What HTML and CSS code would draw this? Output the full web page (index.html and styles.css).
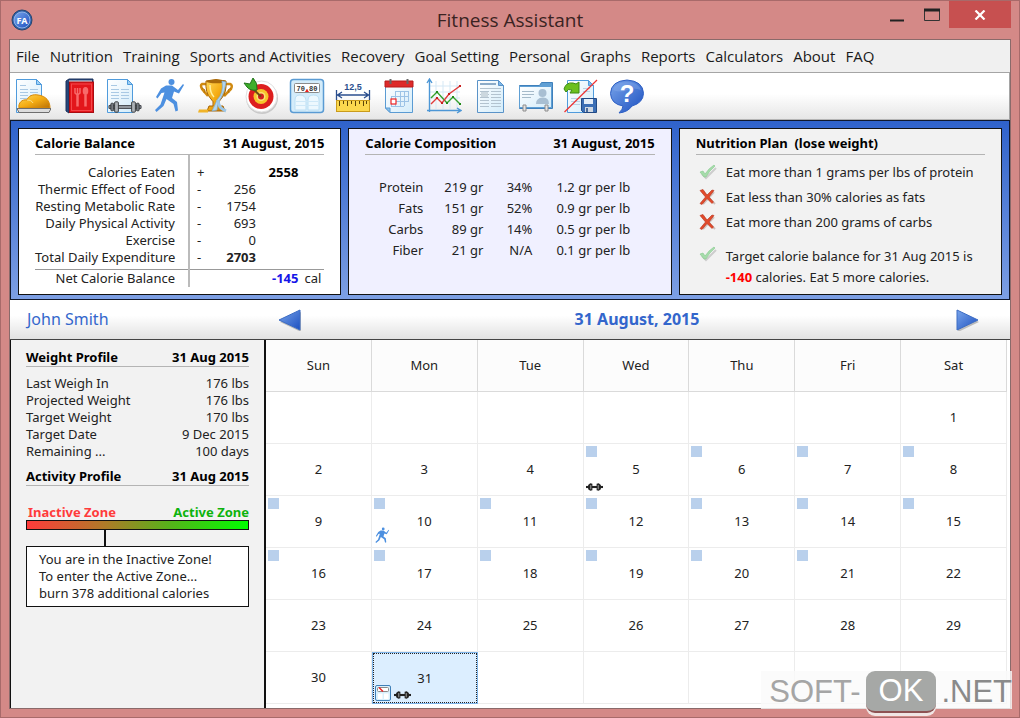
FILE: index.html
```html
<!DOCTYPE html>
<html lang="en">
<head>
    <meta charset="UTF-8">
    <meta name="viewport" content="width=device-width, initial-scale=1.0">
    <title>Fitness Assistant</title>
    <link rel="stylesheet" href="styles.css">
</head>
<body>
    <!-- shared icons -->
    <svg class="defs" aria-hidden="true">
        <defs>
            <linearGradient id="gold" x1="0" y1="0" x2="1" y2="1">
                <stop offset="0" stop-color="#ffd95a"/>
                <stop offset="0.5" stop-color="#f5ad14"/>
                <stop offset="1" stop-color="#b96f05"/>
            </linearGradient>
            <linearGradient id="blue" x1="0" y1="0" x2="1" y2="1">
                <stop offset="0" stop-color="#79a5ea"/>
                <stop offset="1" stop-color="#1c4fc0"/>
            </linearGradient>
            <linearGradient id="paper" x1="0" y1="0" x2="1" y2="1">
                <stop offset="0" stop-color="#ffffff"/>
                <stop offset="1" stop-color="#d3ecfa"/>
            </linearGradient>
        </defs>
        <symbol id="sheet" viewBox="0 0 36 36">
            <path d="M1.5 1.5h20l5 5v28h-25z" fill="url(#paper)" stroke="#4f9bdc"/>
            <path d="M21.5 1.5v5h5z" fill="#9dd0f5" stroke="#4f9bdc"/>
            <path d="M5 7.5h6M5 11.5h8M15 11.5h8M5 14.5h8M15 14.5h8M5 17.5h8M15 17.5h8M5 20.5h8M15 20.5h8" stroke="#a9c9e4"/>
        </symbol>
        <symbol id="runner" viewBox="0 0 36 36">
            <circle cx="19.500" cy="4" r="3" fill="currentColor"/>
            <path d="M9 10.500 14 7.500h6l6 4.500 5-6 1 1-5 8.500-5-2-2 6.500 5 4 1 8.500-2.500 1-2-7.500-7-5-3 7-7 6-1.500-2 5.500-5.500 4-12-3 .500-4 5.500-1.500-1.500z" fill="currentColor"/>
        </symbol>
        <symbol id="dumbbell" viewBox="0 0 36 12">
            <path d="M1 4.500h34v3H1z" fill="#9aa0a6" stroke="#3b3f44"/>
            <rect x="3" y="2" width="3" height="8" rx="1" fill="#777c82" stroke="#34383c"/>
            <rect x="7" y="0.500" width="4" height="11" rx="1" fill="#aeb3b8" stroke="#34383c"/>
            <rect x="25" y="0.500" width="4" height="11" rx="1" fill="#aeb3b8" stroke="#34383c"/>
            <rect x="30" y="2" width="3" height="8" rx="1" fill="#777c82" stroke="#34383c"/>
        </symbol>
        <symbol id="weights" viewBox="0 0 16 8">
            <path d="M0 4h16" stroke="#222" stroke-width="2"/>
            <path d="M2 2 4 .500 6 1v6L4 7.500 2 6zM14 2 12 .500 10 1v6l2 .500L14 6z" fill="#222"/>
            <path d="M4.500 2v4M11.500 2v4" stroke="#999"/>
        </symbol>
        <symbol id="check" viewBox="0 0 18 16">
            <path d="M3 10l4 4L17 4" fill="none" stroke="#cdcdcd" stroke-width="2"/>
            <path d="M1 8l3-1 2 3q4-6 9-9l1 1q-6 5-9 11H5z" fill="#a5dcaa" stroke="#86c98e" stroke-width="0.600"/>
        </symbol>
        <symbol id="cross" viewBox="0 0 18 16">
            <path d="M4 3l12 12M15 3 4 15" stroke="#cfc0bc" stroke-width="2"/>
            <path d="M1 1.500 4 .500 8 6 13 1l2 .500L10 8l4.500 5-1.500 1.500-5-5-5 6-2-1L6.500 8z" fill="#e24a2b" stroke="#b5301a" stroke-width="0.600"/>
        </symbol>
    </svg>

    <div class="window">
        <header class="titlebar">
            <svg class="logo" viewBox="0 0 22 22" aria-hidden="true">
                <circle cx="11" cy="11" r="10" fill="#2d5ea8" stroke="#27466f"/>
                <circle cx="11" cy="11" r="8" fill="url(#blue)" stroke="#8fb4e6"/>
                <text x="11" y="14.500" text-anchor="middle" class="logo-text">FA</text>
            </svg>
            <h1>Fitness Assistant</h1>
            <div class="controls">
                <button type="button" aria-label="Minimize">
                    <svg width="16" height="14"><path d="M1 12.500h14" stroke="#222" stroke-width="2"/></svg>
                </button>
                <button type="button" aria-label="Maximize">
                    <svg width="16" height="14"><path d="M.500 1.500h15v11H.500z" fill="none" stroke="#333"/><path d="M0 2h16" stroke="#222" stroke-width="3"/></svg>
                </button>
                <button type="button" class="close" aria-label="Close">
                    <svg width="12" height="10"><path d="M1.500.500l9 9M10.500.500l-9 9" stroke="#fff" stroke-width="2.200"/></svg>
                </button>
            </div>
        </header>

        <div class="client">
            <nav class="menu">
                <a href="#">File</a>
                <a href="#">Nutrition</a>
                <a href="#">Training</a>
                <a href="#">Sports and Activities</a>
                <a href="#">Recovery</a>
                <a href="#">Goal Setting</a>
                <a href="#">Personal</a>
                <a href="#">Graphs</a>
                <a href="#">Reports</a>
                <a href="#">Calculators</a>
                <a href="#">About</a>
                <a href="#">FAQ</a>
            </nav>

            <div class="toolbar">
                <div class="tools">
                    <button type="button" aria-label="Meals">
                        <svg viewBox="0 0 36 36">
                            <use href="#sheet" width="36" height="36"/>
                            <path d="M4 30c-1-5 3-9 8-8 1-4 6-6 11-5 8 1 12 6 12 13z" fill="url(#gold)" stroke="#d98a08"/>
                            <path d="M12 22c3 0 5 1 6 3" fill="none" stroke="#fce08a"/>
                            <path d="M2 30.500h34l-2 4H4z" fill="#dcdcdc" stroke="#6e6e6e"/>
                        </svg>
                    </button>
                    <button type="button" aria-label="Recipes">
                        <svg viewBox="0 0 36 36">
                            <path d="M5 3l3-2h24v3H8v31l-3-2z" fill="#27477c" stroke="#1c325a"/>
                            <path d="M8 2.500h23v2H8z" fill="#e9e9e9"/>
                            <rect x="8.500" y="4" width="24" height="30.500" fill="#e3161b" stroke="#a80d12"/>
                            <rect x="10.500" y="6" width="20" height="26.500" fill="none" stroke="#f4474a"/>
                            <path d="M16.500 16v12.500M24.500 17v11.500" stroke="#f86a6a" stroke-width="2.500"/>
                            <path d="M14 10v5q2.500 3 5 0v-5M16.500 10v6" fill="none" stroke="#f86a6a" stroke-width="1.500"/>
                            <ellipse cx="24.500" cy="13" rx="2.800" ry="4" fill="#f86a6a"/>
                        </svg>
                    </button>
                    <button type="button" aria-label="Training log">
                        <svg viewBox="0 0 36 36">
                            <use href="#sheet" width="36" height="36"/>
                            <use href="#dumbbell" x="2" y="23" width="34" height="12"/>
                        </svg>
                    </button>
                    <button type="button" aria-label="Activities" class="blue">
                        <svg viewBox="0 0 36 36"><use href="#runner" width="36" height="36"/></svg>
                    </button>
                    <button type="button" aria-label="Achievements">
                        <svg viewBox="0 0 36 36">
                            <path d="M10 6H4q-2 1 0 5l6 7M27 6h5q3 1 1 5l-7 7" fill="none" stroke="#d08a10" stroke-width="2.500"/>
                            <path d="M4 10l3 2-1 3M33 10l-3 2 1 3" fill="none" stroke="#b87407"/>
                            <path d="M8 3q10-3 20 0 1 12-5 18-3 2-2 7h4l2 5H9l2-5h4q1-5-2-7Q7 15 8 3z" fill="url(#gold)" stroke="#a66406"/>
                            <ellipse cx="18" cy="3.500" rx="9.500" ry="1.800" fill="#a8690a"/>
                            <path d="M12 7q0 8 4 12" fill="none" stroke="#fff0a0" stroke-width="1.500"/>
                            <path d="M24 3q2 12-5 19-2 5-5 11l5-1q0-8 4-12 4-7 5-16z" fill="#b4d5ee" stroke="#7aaed5" stroke-width="0.700"/>
                            <path d="M20 22q0 8 8 11" fill="none" stroke="#9cc6e6" stroke-width="3"/>
                            <path d="M1 31.500h9v3H0z" fill="#f0b429"/>
                        </svg>
                    </button>
                    <button type="button" aria-label="Goals">
                        <svg viewBox="0 0 36 36">
                            <circle cx="19" cy="20" r="16" fill="#c9c9c9"/>
                            <circle cx="18.500" cy="18.500" r="15.500" fill="#fff" stroke="#e0e0e0"/>
                            <circle cx="18" cy="18.500" r="12.500" fill="#dd1f1f"/>
                            <circle cx="18" cy="18.500" r="7.500" fill="#f7c52b"/>
                            <circle cx="18" cy="18.500" r="4.500" fill="#fbe277"/>
                            <circle cx="18" cy="18.500" r="3" fill="#d32020"/>
                            <path d="M18 18.500 7 8" stroke="#6b4a14" stroke-width="2"/>
                            <path d="M1 5l6 1 3-6q5 5 4 12-7 1-10-3z" fill="#3fae2c" stroke="#21751a"/>
                        </svg>
                    </button>
                    <button type="button" aria-label="Weight">
                        <svg viewBox="0 0 36 36">
                            <rect x="1.500" y="1.500" width="33" height="33" rx="3" fill="#d4ecfa" stroke="#5a9bd3" stroke-width="1.500"/>
                            <rect x="5.500" y="5.500" width="25" height="9" rx="1" fill="#fff" stroke="#8a8a8a"/>
                            <text x="18" y="12.500" text-anchor="middle" class="scale-text">70,80</text>
                            <path d="M18 11l2 3h-4z" fill="#e22"/>
                            <path d="M6 32V22q0-5 5-5t6 5v10zM19 32V22q0-5 5.500-5t5.500 5v10z" fill="#edf8fe" stroke="#bcdff4"/>
                            <path d="M7 23.500h22M7 27.500h22" stroke="#cfe8f7"/>
                        </svg>
                    </button>
                    <button type="button" aria-label="Measurements">
                        <svg viewBox="0 0 36 36">
                            <text x="18" y="12" text-anchor="middle" class="ruler-text">12,5</text>
                            <path d="M1.500 12v10M34.500 12v10M2 17h32M7 14l-4.500 3 4.500 3M29 14l4.500 3-4.500 3" fill="none" stroke="#2b4f8e" stroke-width="1.300"/>
                            <rect x="1.500" y="22.500" width="33" height="11" fill="#fbd84e" stroke="#c99b1c"/>
                            <path d="M4.500 23v5M8.500 23v3M12.500 23v5M16.500 23v3M20.500 23v5M24.500 23v3M28.500 23v5M31.500 23v3" stroke="#5c4508"/>
                        </svg>
                    </button>
                    <button type="button" aria-label="Calendar">
                        <svg viewBox="0 0 36 36">
                            <path d="M4.500 4.500h27v30H9l-4.500-4.500z" fill="url(#paper)" stroke="#5a9bd3"/>
                            <path d="M4.500 30H9v4.500z" fill="#8cc4ee" stroke="#5a9bd3"/>
                            <path d="M4 3h28v6H4z" fill="#dd2a2a" stroke="#b81b1b"/>
                            <path d="M9.500 1v5M26.500 1v5" stroke="#666" stroke-width="2"/>
                            <path d="M15 13.500h13M10 18.500h18M10 23.500h18M10 28.500h13M14.500 13v15M19.500 13v15M23.500 13v15M27.500 13v11M10.500 18v10" stroke="#9cc3e6"/>
                            <rect x="10" y="21" width="5" height="5" fill="#fff" stroke="#e22" stroke-width="1.200"/>
                        </svg>
                    </button>
                    <button type="button" aria-label="Graphs">
                        <svg viewBox="0 0 36 36">
                            <path d="M4 8h30M4 14h30M4 20h30M10 3v28M17 3v28M24 3v28M31 3v28" stroke="#d5e8f5"/>
                            <path d="M3.500 34V2M1 5l2.500-4L6 5M1 32.500h33M31 30l4 2.500-4 2.500" fill="none" stroke="#4d97d6" stroke-width="1.400"/>
                            <path d="M5 20l6-6 10 11 6-6 7 7" fill="none" stroke="#35a02c" stroke-width="1.400"/>
                            <path d="M5 26l6-6 5 5 7-9 11-8" fill="none" stroke="#e03a3a" stroke-width="1.400"/>
                            <path d="M10 13h2v2h-2zM20 24h2v2h-2zM26 18h2v2h-2zM33 25h2v2h-2z" fill="#1f8a18"/>
                            <path d="M10 19h2v2h-2zM15 24h2v2h-2zM22 15h2v2h-2zM33 7h2v2h-2z" fill="#c81e1e"/>
                        </svg>
                    </button>
                    <button type="button" aria-label="Reports">
                        <svg viewBox="0 0 36 36">
                            <path d="M5.500 2.500h21l5 5v27h-26z" fill="url(#paper)" stroke="#5a93c8"/>
                            <path d="M26.500 2.500v5h5z" fill="#7db8ea" stroke="#5a93c8"/>
                            <path d="M8 6h16" stroke="#8babc8" stroke-width="2"/>
                            <path d="M8 10.500h21M8 13.500h9M19 13.500h10M8 16.500h9M19 16.500h10M8 19.500h9M19 19.500h10M8 22.500h9M19 22.500h10M8 25.500h9M19 25.500h10M8 28.500h9M19 28.500h10" stroke="#b3c3cf"/>
                            <path d="M9 14h7v5H9z" fill="#ccd8df"/>
                        </svg>
                    </button>
                    <button type="button" aria-label="Personal card">
                        <svg viewBox="0 0 36 36">
                            <path d="M1.500 7.500h20l2-3h11v26h-33z" fill="#5f9fd4" stroke="#3f80bb"/>
                            <path d="M1.500 8.500h32v21h-32z" fill="url(#paper)" stroke="#5f9fd4"/>
                            <path d="M4 13.500h12M4 16.500h12M4 19.500h9" stroke="#a5bac9"/>
                            <circle cx="24.500" cy="15" r="4" fill="#a8bfd2"/>
                            <path d="M18 26q0-6 6.500-6.500T31 26z" fill="#a8bfd2"/>
                            <path d="M5 27h3v6H5zM27 27h3v6h-3z" fill="#e4e4e4" stroke="#8c8c8c"/>
                        </svg>
                    </button>
                    <button type="button" aria-label="Import">
                        <svg viewBox="0 0 36 36">
                            <path d="M4.500 2.500h21l5 5v27h-26z" fill="url(#paper)" stroke="#4f9bdc"/>
                            <path d="M25.500 2.500v5h5z" fill="#7db8ea" stroke="#4f9bdc"/>
                            <path d="M20 10.500h7M20 13.500h7M8 20.500h18M8 23.500h9M8 26.500h9" stroke="#b9d3e6"/>
                            <path d="M1 11q2-7 9-6l3 1 3-2v11H7l2-3q-4-2-6 2z" fill="#6cc01e" stroke="#3a8a10"/>
                            <path d="M18.500 20.500h15v14h-13l-2-2z" fill="#3c6fb5" stroke="#224a85"/>
                            <path d="M21 21h9v5h-9z" fill="#e5eef8"/>
                            <path d="M22 29h8v5h-8z" fill="#cfd8e2"/>
                            <path d="M24 30v4" stroke="#224a85" stroke-width="1.500"/>
                            <path d="M1.500 34 34 2" stroke="#ee3333" stroke-width="1.200"/>
                        </svg>
                    </button>
                    <button type="button" aria-label="Help">
                        <svg viewBox="0 0 36 36">
                            <path d="M18 2q16 1 16.500 13.500Q34 25 23 28q-4 6-13 7 4-4 4-7Q2 26 1.500 15.500 2 3 18 2z" fill="url(#blue)" stroke="#2d5fc4"/>
                            <path d="M4 12q3-8 14-8t14 8q-8-3-14 0t-14 0z" fill="#8fb3ef" opacity=".35"/>
                            <text x="18" y="24" text-anchor="middle" class="help-text">?</text>
                        </svg>
                    </button>
                </div>
            </div>

            <section class="summary">
                <article class="panel">
                    <div class="panel-head"><h2>Calorie Balance</h2><span>31 August, 2015</span></div>
                    <table class="balance">
                        <tr class="spacer"><td></td><td></td><td></td><td></td></tr>
                        <tr><th>Calories Eaten</th><td class="sign">+</td><td></td><td class="sum">2558</td></tr>
                        <tr><th>Thermic Effect of Food</th><td class="sign">-</td><td>256</td><td></td></tr>
                        <tr><th>Resting Metabolic Rate</th><td class="sign">-</td><td>1754</td><td></td></tr>
                        <tr><th>Daily Physical Activity</th><td class="sign">-</td><td>693</td><td></td></tr>
                        <tr><th>Exercise</th><td class="sign">-</td><td>0</td><td></td></tr>
                        <tr class="total"><th>Total Daily Expenditure</th><td class="sign">-</td><td><b>2703</b></td><td></td></tr>
                        <tr class="net"><th>Net Calorie Balance</th><td></td><td></td><td class="cal"><b>-145</b>cal</td></tr>
                    </table>
                </article>

                <article class="panel composition">
                    <div class="panel-head"><h2>Calorie Composition</h2><span>31 August, 2015</span></div>
                    <table class="nutrients">
                        <tr><th>Protein</th><td>219 gr</td><td>34%</td><td>1.2 gr per lb</td></tr>
                        <tr><th>Fats</th><td>151 gr</td><td>52%</td><td>0.9 gr per lb</td></tr>
                        <tr><th>Carbs</th><td>89 gr</td><td>14%</td><td>0.5 gr per lb</td></tr>
                        <tr><th>Fiber</th><td>21 gr</td><td>N/A</td><td>0.1 gr per lb</td></tr>
                    </table>
                </article>

                <article class="panel plan">
                    <div class="panel-head"><h2>Nutrition Plan&nbsp; (lose weight)</h2></div>
                    <ul>
                        <li><svg><use href="#check"/></svg>Eat more than 1 grams per lbs of protein</li>
                        <li><svg><use href="#cross"/></svg>Eat less than 30% calories as fats</li>
                        <li><svg><use href="#cross"/></svg>Eat more than 200 grams of carbs</li>
                        <li class="target"><svg><use href="#check"/></svg><p>Target calorie balance for 31 Aug 2015 is<br><b>-140</b> calories. Eat 5 more calories.</p></li>
                    </ul>
                </article>
            </section>

            <div class="daybar">
                <span class="user">John Smith</span>
                <div class="switch">
                    <button type="button" aria-label="Previous day"><svg viewBox="0 0 24 22"><path d="M2 13 23 3v20z" fill="#bbb"/><path d="M1 11 22 1v20z" fill="url(#blue)" stroke="#3c6cc4"/></svg></button>
                    <h2>31 August, 2015</h2>
                    <button type="button" aria-label="Next day"><svg viewBox="0 0 24 22"><path d="M2 3v20l21-10z" fill="#bbb"/><path d="M1 1v20l21-10z" fill="url(#blue)" stroke="#3c6cc4"/></svg></button>
                </div>
            </div>

            <main class="main">
                <aside class="profile">
                    <div class="profile-head"><h3>Weight Profile</h3><span>31 Aug 2015</span></div>
                    <dl>
                        <div><dt>Last Weigh In</dt><dd>176 lbs</dd></div>
                        <div><dt>Projected Weight</dt><dd>176 lbs</dd></div>
                        <div><dt>Target Weight</dt><dd>170 lbs</dd></div>
                        <div><dt>Target Date</dt><dd>9 Dec 2015</dd></div>
                        <div><dt>Remaining ...</dt><dd>100 days</dd></div>
                    </dl>
                    <div class="profile-head"><h3>Activity Profile</h3><span>31 Aug 2015</span></div>
                    <div class="zones"><span class="inactive">Inactive Zone</span><span class="active">Active Zone</span></div>
                    <div class="zone-bar"></div>
                    <div class="zone-tick"></div>
                    <p class="zone-note">You are in the Inactive Zone!<br>To enter the Active Zone...<br>burn 378 additional calories</p>
                </aside>

                <table class="calendar">
                    <thead>
                        <tr><th>Sun</th><th>Mon</th><th>Tue</th><th>Wed</th><th>Thu</th><th>Fri</th><th>Sat</th></tr>
                    </thead>
                    <tbody>
                        <tr><td></td><td></td><td></td><td></td><td></td><td></td><td>1</td></tr>
                        <tr><td>2</td><td>3</td><td>4</td><td class="mark">5<span class="icons"><svg class="lift"><use href="#weights"/></svg></span></td><td class="mark">6</td><td class="mark">7</td><td class="mark">8</td></tr>
                        <tr><td class="mark">9</td><td class="mark">10<span class="icons"><svg class="run"><use href="#runner"/></svg></span></td><td class="mark">11</td><td class="mark">12</td><td class="mark">13</td><td class="mark">14</td><td class="mark">15</td></tr>
                        <tr><td class="mark">16</td><td class="mark">17</td><td class="mark">18</td><td class="mark">19</td><td class="mark">20</td><td class="mark">21</td><td>22</td></tr>
                        <tr><td>23</td><td>24</td><td>25</td><td>26</td><td>27</td><td>28</td><td>29</td></tr>
                        <tr>
                            <td>30</td>
                            <td class="selected">31
                                <span class="icons">
                                    <svg class="scale" viewBox="0 0 16 16">
                                        <rect x="0.500" y="0.500" width="15" height="15" rx="1.500" fill="#d9f0fc" stroke="#3f7fb8"/>
                                        <rect x="2.500" y="2.500" width="11" height="4" rx="1" fill="#fff" stroke="#8a8a8a"/>
                                        <path d="M4 2.500l4 4" stroke="#e22" stroke-width="1.500"/>
                                        <path d="M3 8.500h4.500V14H3zM9 8.500h4.500V14H9z" fill="#fff"/>
                                    </svg>
                                    <svg class="lift"><use href="#weights"/></svg>
                                </span>
                            </td>
                            <td></td><td></td><td></td><td></td><td></td>
                        </tr>
                    </tbody>
                </table>
            </main>
        </div>

        <div class="watermark"><span>SOFT-</span><span class="ok">OK</span><span class="net-part">.NET</span></div>
    </div>
</body>
</html>
```
FILE: styles.css
```css
* {
    box-sizing: border-box;
}

body {
    margin: 0;
    font-family: "Noto Sans", "Open Sans", sans-serif;
    font-size: 13px;
    line-height: 17px;
    color: #222;
}

h1, h2, h3, p, ul, dl, dd {
    margin: 0;
    padding: 0;
}

button {
    border: 0;
    padding: 0;
    background: none;
}

svg {
    display: block;
}

.defs {
    position: absolute;
    width: 0;
    height: 0;
}

.window {
    position: relative;
    display: flex;
    flex-direction: column;
    min-height: 100vh;
    padding: 0 8px 8px;
    border: 1px solid #a86a6a;
    background: #d48987;
}

/* title bar */
.titlebar {
    display: grid;
    grid-template-columns: 1fr auto 1fr;
    height: 38px;

    h1 {
        align-self: center;
        font-family: "Open Sans", sans-serif;
        font-size: 19px;
        line-height: 24px;
        font-weight: 400;
        color: #3a2322;
    }
}

.logo {
    width: 22px;
    height: 22px;
    margin: 8px 0 0 2px;
}

.logo-text {
    font-size: 9px;
    font-weight: 700;
    fill: #fff;
}

.controls {
    display: flex;
    justify-content: flex-end;

    button {
        width: 35px;
        height: 27px;
        display: flex;
        align-items: center;
        justify-content: center;
    }

    .close {
        width: 62px;
        background: #c75050;
    }
}

.client {
    flex: 1;
    display: flex;
    flex-direction: column;
    border: 1px solid #8a6a6a;
    background: #f0f0f0;
}

.menu {
    display: flex;
    gap: 10px;
    padding: 6px 6px 5px;
    font-family: "Open Sans", sans-serif;
    font-size: 15px;
    line-height: 21px;

    a {
        color: #1a1a1a;
        text-decoration: none;
        white-space: nowrap;
    }
}

.toolbar {
    padding: 5px 0;
    border: 1px solid #a5a5a5;
    border-left: 0;
    border-bottom-color: #b5b5b5;
    background: linear-gradient(#fff 45%, #e6e6e6);
}

.tools {
    display: grid;
    grid-template-columns: repeat(14, 1fr);
    justify-items: center;
    max-width: 640px;

    svg {
        width: 36px;
        height: 36px;
    }

    .blue {
        color: #4d90e0;
    }
}

.scale-text {
    font: 700 7px "Liberation Mono", monospace;
    fill: #333;
}

.ruler-text {
    font-size: 9px;
    font-weight: 700;
    fill: #2b4f8e;
}

.help-text {
    font-size: 24px;
    font-weight: 800;
    fill: #fff;
}

/* panels */
.summary {
    display: grid;
    grid-template-columns: repeat(3, 1fr);
    gap: 7px;
    padding: 7px 7px 4px;
    border: 1px solid #10182c;
    background: linear-gradient(#2f62cb, #7d9fe4);
}

.panel {
    height: 167px;
    padding: 5px 16px;
    border: 1px solid #111;
    background: #fff;
}

.composition {
    background: #f0f0ff;
}

.plan {
    background: #f2f2f2;
}

.panel-head, .profile-head {
    display: flex;
    justify-content: space-between;
    font-weight: 700;
    line-height: 18px;
    white-space: nowrap;
    color: #000;
    border-bottom: 1px solid #b4b4b4;

    h2, h3 {
        font-size: 13px;
    }
}

.panel-head {
    height: 21px;
}

.balance {
    width: 100%;
    table-layout: fixed;
    border-collapse: collapse;

    th, td {
        height: 17px;
        padding: 0;
        text-align: right;
        font-weight: 400;
        white-space: nowrap;
    }

    th {
        padding-right: 13px;
        border-right: 2px solid #bbb;
    }

    .spacer td {
        height: 9px;
    }

    .spacer td:first-child {
        width: 154px;
        border-right: 2px solid #bbb;
    }

    .spacer td:nth-child(2) {
        width: 26px;
    }

    .spacer td:nth-child(3) {
        width: 41px;
    }

    .sign {
        text-align: left;
        padding-left: 7px;
    }

    .sum {
        font-weight: 700;
        color: #000;
        padding-right: 26px;
    }

    .total th, .total td {
        height: 20px;
        vertical-align: top;
    }

    .net th, .net td {
        height: 18px;
        border-top: 1px solid #999;
    }

    .cal {
        padding-right: 3px;
    }

    .cal b {
        margin-right: 6px;
        color: #1616e8;
    }
}

.nutrients {
    margin-top: 22px;
    border-spacing: 0;

    th, td {
        height: 21px;
        padding: 0;
        font-weight: 400;
        text-align: right;
        white-space: nowrap;
    }

    th {
        width: 58px;
    }

    td:nth-child(2) {
        width: 60px;
    }

    td:nth-child(3) {
        width: 49px;
    }

    td:nth-child(4) {
        width: 98px;
    }
}

.plan ul {
    margin-top: 9px;
    list-style: none;

    li {
        display: flex;
        gap: 9px;
        padding-left: 3px;
        margin-bottom: 8px;
        white-space: nowrap;
    }

    svg {
        flex: none;
        width: 18px;
        height: 16px;
    }

    .target {
        margin: 15px 0 0;
        line-height: 21px;
    }

    b {
        color: #f00;
    }
}

/* current day */
.daybar {
    display: grid;
    grid-template-columns: 256px 1fr;
    align-items: center;
    height: 40px;
    border-bottom: 1px solid #444;
    background: linear-gradient(#fff 40%, #e2e2e2);
    color: #3366cc;

    .user {
        padding-left: 17px;
        font-size: 16px;
    }

    h2 {
        padding-left: 16px;
        font-size: 16px;
    }
}

.switch {
    display: flex;
    align-items: center;
    justify-content: space-between;
    padding: 0 30px 0 12px;

    svg {
        width: 24px;
        height: 22px;
    }
}

.main {
    flex: 1;
    display: grid;
    grid-template-columns: 256px 1fr;
    background: #fff;
    border-right: 3px solid #fff;
}

.profile {
    padding: 8px 15px;
    background: #f2f2f2;
    border-left: 1px solid #111;
    border-right: 2px solid #111;

    dl {
        padding: 8px 0 7px;
    }

    dl div {
        display: flex;
        justify-content: space-between;
    }
}

.zones {
    display: flex;
    justify-content: space-between;
    margin-top: 18px;
    padding-left: 2px;
    font-weight: 700;
    line-height: 16px;

    .inactive {
        color: #ff3b3b;
    }

    .active {
        color: #0db30d;
    }
}

.zone-bar {
    height: 10px;
    border: 1px solid #111;
    background: linear-gradient(to right, #ff3b3b, #b07a28 35%, #55b31a 65%, #00ff00);
}

.zone-tick {
    width: 2px;
    height: 16px;
    margin-left: 35%;
    background: #111;
}

.zone-note {
    padding: 4px 12px;
    border: 1px solid #111;
    background: #fff;
    white-space: nowrap;
}

.calendar {
    width: 100%;
    align-self: start;
    table-layout: fixed;
    border-spacing: 0;

    th, td {
        position: relative;
        height: 52px;
        padding: 0;
        font-weight: 400;
        text-align: center;
        border-right: 1px solid #ececec;
        border-bottom: 1px solid #ececec;
    }

    th {
        background: #fcfcfc;
        border-color: #dadada;
    }

    .mark::before {
        content: "";
        position: absolute;
        top: 2px;
        left: 2px;
        width: 11px;
        height: 11px;
        background: #b9d0ec;
    }

    .selected {
        background: #dceeff;
        border: 1px solid #7eb4ea;
        outline: 1px dotted #222;
        outline-offset: -2px;
    }
}

.icons {
    position: absolute;
    left: 2px;
    bottom: 2px;
    display: flex;
    align-items: flex-end;
    gap: 3px;

    .scale {
        width: 16px;
        height: 16px;
    }

    .lift {
        width: 17px;
        height: 12px;
    }

    .run {
        width: 17px;
        height: 19px;
        color: #4d90e0;
    }
}

.watermark {
    position: absolute;
    right: 7px;
    bottom: 4px;
    display: flex;
    align-items: center;
    gap: 5px;
    padding-left: 8px;
    font-family: "Liberation Sans", Arial, sans-serif;
    font-size: 31px;
    line-height: 40px;
    color: #a5a5a5;
    background: linear-gradient(rgba(250, 250, 250, .8) 38px, transparent 38px);

    .ok {
        padding: 0 13px;
        border-radius: 9px;
        border-bottom: 2px solid #8d5252;
        box-shadow: 0 3px 0 #f0e6e4;
        background: #a6a8a6;
        color: #fff;
    }

    .net-part {
        color: #8a8a8a;
    }
}
```
